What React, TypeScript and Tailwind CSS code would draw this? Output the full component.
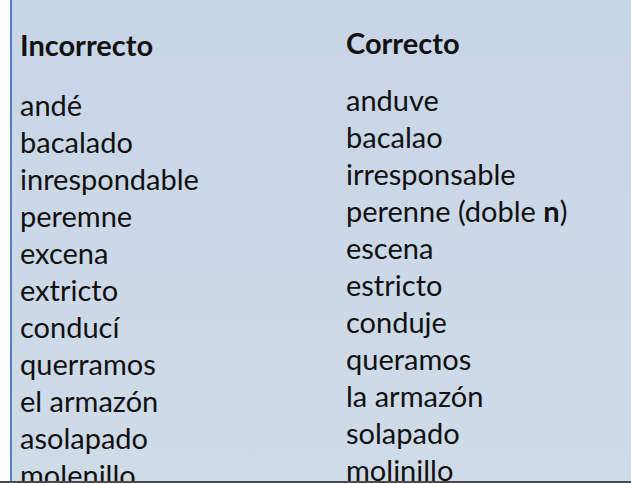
const incorrect = [
  "andé",
  "bacalado",
  "inrespondable",
  "peremne",
  "excena",
  "extricto",
  "conducí",
  "querramos",
  "el armazón",
  "asolapado",
  "molenillo",
];

const correct: React.ReactNode[] = [
  "anduve",
  "bacalao",
  "irresponsable",
  <>
    perenne (doble <b className="font-bold">n</b>)
  </>,
  "escena",
  "estricto",
  "conduje",
  "queramos",
  "la armazón",
  "solapado",
  "molinillo",
];

export default function App() {
  return (
    <div className="flex h-[483px] w-[631px] overflow-hidden border-b-2 border-[#4a4a4a] bg-white text-[#111] [font-family:Lato,'Noto_Sans',sans-serif]">
      <div className="w-[10px] shrink-0 bg-white" />
      <div className="flex flex-1 overflow-hidden border-l-2 border-[#4f81bd] bg-gradient-to-b from-[#c8d5e7] to-[#cfdbe7] text-[29px] leading-[37px]">
        <div className="w-[334px] shrink-0 pl-[8px] pt-[26px]">
          <div className="font-bold">Incorrecto</div>
          <div className="mt-[23px] flex flex-col">
            {incorrect.map((w) => (
              <div key={w} className="whitespace-nowrap">{w}</div>
            ))}
          </div>
        </div>
        <div className="flex-1 pt-[24px]">
          <div className="font-bold">Correcto</div>
          <div className="mt-[20px] flex flex-col">
            {correct.map((w, i) => (
              <div key={i} className="whitespace-nowrap">{w}</div>
            ))}
          </div>
        </div>
      </div>
    </div>
  );
}
